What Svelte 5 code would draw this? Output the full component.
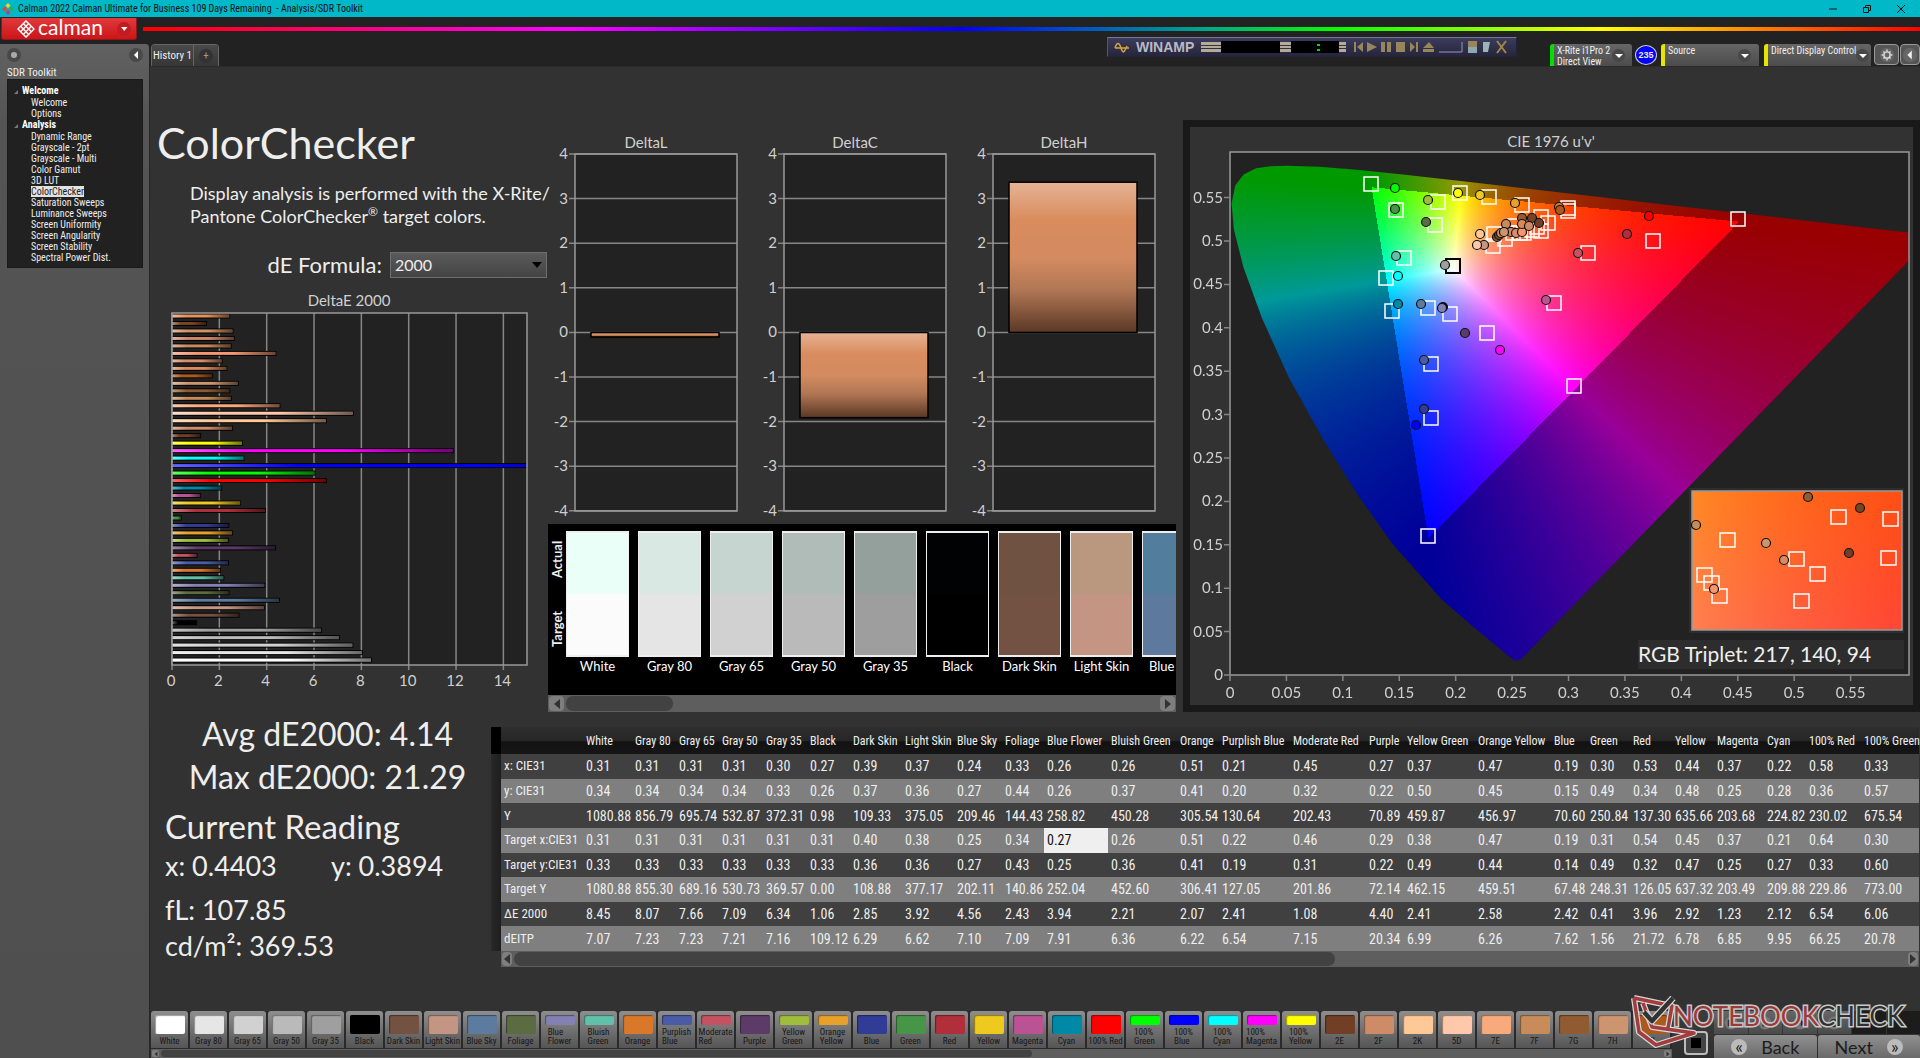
<script>
  import { onMount } from 'svelte';

  const tree = [
    { title: 'Welcome', items: ['Welcome', 'Options'] },
    {
      title: 'Analysis',
      items: [
        'Dynamic Range', 'Grayscale - 2pt', 'Grayscale - Multi', 'Color Gamut', '3D LUT', 'ColorChecker',
        'Saturation Sweeps', 'Luminance Sweeps', 'Screen Uniformity', 'Screen Angularity', 'Screen Stability',
        'Spectral Power Dist.'
      ]
    }
  ];
  const current = 'ColorChecker';

  // name, swatch colour, dE2000
  const patches = [
    ['White', '#ffffff', 8.45], ['Gray 80', '#e6e6e6', 8.07], ['Gray 65', '#d1d1d1', 7.66],
    ['Gray 50', '#bababa', 7.09], ['Gray 35', '#9f9f9f', 6.34], ['Black', '#000000', 1.06],
    ['Dark Skin', '#735242', 2.85], ['Light Skin', '#c39582', 3.92], ['Blue Sky', '#5d7b9e', 4.56],
    ['Foliage', '#5b6c42', 2.43], ['Blue Flower', '#8380b3', 3.94], ['Bluish Green', '#62bfa9', 2.21],
    ['Orange', '#da7829', 2.07], ['Purplish Blue', '#4a5ca6', 2.41], ['Moderate Red', '#c45262', 1.08],
    ['Purple', '#5d3b69', 4.4], ['Yellow Green', '#9fbc3c', 2.41], ['Orange Yellow', '#e7a12b', 2.58],
    ['Blue', '#313c96', 2.42], ['Green', '#479647', 0.41], ['Red', '#b02f3a', 3.96],
    ['Yellow', '#eec91e', 2.92], ['Magenta', '#bb5294', 1.23], ['Cyan', '#0088a7', 2.12],
    ['100% Red', '#ff0000', 6.54], ['100% Green', '#00ff00', 6.06], ['100% Blue', '#0000ff', 21.29],
    ['100% Cyan', '#00ffff', 3.06], ['100% Magenta', '#ff00ff', 11.9], ['100% Yellow', '#ffff00', 3.0],
    ['2E', '#703f25', 1.23], ['2F', '#cd8c67', 2.58], ['2K', '#ffc896', 6.54], ['5D', '#ffc8ab', 7.68],
    ['7E', '#f8aa7d', 4.58], ['7F', '#c78c5a', 2.52], ['7G', '#905b30', 2.46], ['7H', '#cd9470', 2.82],
    ['7I', '#ab591c', 1.72], ['7J', '#d9895a', 2.34], ['8D', '#d98d6a', 2.14], ['8E', '#f59571', 4.41],
    ['8F', '#c98a60', 2.52], ['8G', '#cc8768', 2.65], ['8H', '#d39268', 2.6], ['8I', '#774422', 1.48],
    ['8J', '#e8905a', 2.46]
  ];
  const strip = patches.slice(0, 39);
  const bars = [...patches].reverse();

  // Long swatch names go on two lines
  const wrapName = (n) => (n.length > 10 || /^100% [^R]/.test(n) ? n.replace(' ', '\n') : n);

  const compare = [
    ['White', '#ebfff9', '#fbfbfb'], ['Gray 80', '#d9e8e3', '#e5e5e5'], ['Gray 65', '#c6d5d0', '#d1d1d1'],
    ['Gray 50', '#afbcb8', '#bababa'], ['Gray 35', '#94a09b', '#9e9e9e'], ['Black', '#010204', '#000000'],
    ['Dark Skin', '#6f5241', '#735243'], ['Light Skin', '#ba987f', '#c39582'], ['Blue Sky', '#527d9d', '#5d7a9e']
  ];

  const widths = [49, 44, 43, 44, 44, 43, 52, 52, 48, 42, 64, 69, 42, 71, 76, 38, 71, 76, 36, 43, 42, 42, 50, 42, 55, 58];
  const heads = patches.slice(0, 26).map((p) => p[0]);
  const rows = [
    ['x: CIE31', '0.31 0.31 0.31 0.31 0.30 0.27 0.39 0.37 0.24 0.33 0.26 0.26 0.51 0.21 0.45 0.27 0.37 0.47 0.19 0.30 0.53 0.44 0.37 0.22 0.58 0.33'],
    ['y: CIE31', '0.34 0.34 0.34 0.34 0.33 0.26 0.37 0.36 0.27 0.44 0.26 0.37 0.41 0.20 0.32 0.22 0.50 0.45 0.15 0.49 0.34 0.48 0.25 0.28 0.36 0.57'],
    ['Y', '1080.88 856.79 695.74 532.87 372.31 0.98 109.33 375.05 209.46 144.43 258.82 450.28 305.54 130.64 202.43 70.89 459.87 456.97 70.60 250.84 137.30 635.66 203.68 224.82 230.02 675.54'],
    ['Target x:CIE31', '0.31 0.31 0.31 0.31 0.31 0.31 0.40 0.38 0.25 0.34 0.27 0.26 0.51 0.22 0.46 0.29 0.38 0.47 0.19 0.31 0.54 0.45 0.37 0.21 0.64 0.30'],
    ['Target y:CIE31', '0.33 0.33 0.33 0.33 0.33 0.33 0.36 0.36 0.27 0.43 0.25 0.36 0.41 0.19 0.31 0.22 0.49 0.44 0.14 0.49 0.32 0.47 0.25 0.27 0.33 0.60'],
    ['Target Y', '1080.88 855.30 689.16 530.73 369.57 0.00 108.88 377.17 202.11 140.86 252.04 452.60 306.41 127.05 201.86 72.14 462.15 459.51 67.48 248.31 126.05 637.32 203.49 209.88 229.86 773.00'],
    ['ΔE 2000', '8.45 8.07 7.66 7.09 6.34 1.06 2.85 3.92 4.56 2.43 3.94 2.21 2.07 2.41 1.08 4.40 2.41 2.58 2.42 0.41 3.96 2.92 1.23 2.12 6.54 6.06'],
    ['dEITP', '7.07 7.23 7.23 7.21 7.16 109.12 6.29 6.62 7.10 7.09 7.91 6.36 6.22 6.54 7.15 20.34 6.99 6.26 7.62 1.56 21.72 6.78 6.85 9.95 66.25 20.78']
  ].map(([label, cells]) => ({ label, cells: cells.split(' ') }));

  const deltas = [
    { name: 'DeltaL', value: -0.1 },
    { name: 'DeltaC', value: -1.91 },
    { name: 'DeltaH', value: 3.37 }
  ];
  const steps = [4, 3, 2, 1, 0, -1, -2, -3, -4];

  // CIE 1976 plot: 679 x 523 field
  const W = 679, H = 523, SX = 1128.4, SY = 868;
  const locus = [
    [0.2568, 0.0166], [0.2522, 0.0169], [0.2461, 0.0226], [0.2347, 0.035], [0.2161, 0.0549], [0.1877, 0.0871],
    [0.1441, 0.151], [0.1147, 0.2044], [0.0828, 0.2708], [0.0521, 0.3427], [0.0282, 0.4117], [0.0119, 0.4698],
    [0.0035, 0.5131], [0.0014, 0.5432], [0.0046, 0.5638], [0.0123, 0.577], [0.0231, 0.5837], [0.036, 0.5861],
    [0.0501, 0.5868], [0.0792, 0.5856], [0.1127, 0.5821], [0.1531, 0.5766], [0.2026, 0.5694], [0.2623, 0.5604],
    [0.3315, 0.5501], [0.4035, 0.5393], [0.4692, 0.5296], [0.5203, 0.5219], [0.583, 0.5125], [0.6234, 0.5065]
  ];
  const squares = [
    [141, 32], [166, 58], [208, 50], [230, 41], [259, 45], [292, 53], [205, 73], [338, 56], [338, 59], [508, 67],
    [423, 89], [358, 101], [324, 151], [174, 106], [156, 126], [162, 159], [198, 156], [220, 162], [257, 181],
    [201, 212], [201, 266], [344, 234], [198, 384], [264, 82], [263, 94], [275, 87], [285, 74], [283, 81],
    [290, 81], [294, 81], [311, 65], [318, 71], [311, 79], [307, 75], [302, 78]
  ];
  const dots = [
    [165, 36, '#00ff00'], [165, 57, '#479647'], [198, 48, '#9fbc3c'], [228, 41, '#ffff00'], [250, 43, '#eec91e'],
    [285, 51, '#e7a12b'], [196, 70, '#5b6c42'], [329, 55, '#da7829'], [330, 58, '#ab591c'], [419, 64, '#ff0000'],
    [397, 82, '#b02f3a'], [348, 101, '#c45262'], [316, 148, '#bb5294'], [166, 104, '#62bfa9'], [168, 124, '#00ffff'],
    [168, 152, '#0088a7'], [191, 152, '#5d7b9e'], [213, 155, '#000000'], [212, 156, '#8380b3'], [235, 181, '#5d3b69'],
    [270, 198, '#ff00ff'], [194, 208, '#4a5ca6'], [194, 257, '#313c96'], [186, 273, '#0000ff'], [215, 113, '#9f9f9f'],
    [250, 82, '#ffc896'], [254, 93, '#c39582'], [247, 93, '#ffc8ab'], [267, 85, '#735242'], [269, 83, '#774422'],
    [271, 81, '#c78c5a'], [276, 72, '#c78c5a'], [281, 80, '#cc8768'], [274, 80, '#cd9470'], [286, 81, '#d98d6a'],
    [292, 80, '#f59571'], [292, 66, '#905b30'], [292, 72, '#d9895a'], [302, 66, '#774422'], [299, 74, '#cd8c67'],
    [309, 71, '#703f25']
  ];
  const insetSquares = [[35, 49], [146, 26], [198, 28], [196, 67], [104, 68], [125, 83], [109, 110], [12, 84], [19, 92], [27, 105]];
  const insetDots = [
    [116, 6, '#905b30'], [168, 17, '#774422'], [157, 62, '#703f25'], [74, 52, '#cd9470'], [92, 69, '#d98c5e'],
    [4, 34, '#c78c5a'], [22, 98, '#f59571']
  ];
  const xTicks = Array.from({ length: 12 }, (_, i) => i / 20);
  const xLabel = (t) => String(+t.toFixed(2));

  let field, inset;

  // Linear-light sRGB for a u'v' point, scaled to full brightness and dimmed outside the gamut
  function colour(u, v) {
    const den = 6 * u - 16 * v + 12;
    const x = (9 * u) / den, y = (4 * v) / den;
    const X = x / y, Z = (1 - x - y) / y;
    const rgb = [
      3.2406 * X - 1.5372 - 0.4986 * Z,
      -0.9689 * X + 1.8758 + 0.0415 * Z,
      0.0557 * X - 0.204 + 1.057 * Z
    ];
    const k = Math.min(...rgb) < 0 ? 153 : 255;
    const top = Math.max(...rgb);
    return rgb.map((c) => (Math.max(0, c) / top) * k);
  }

  function paint(canvas, u0, u1, v0, v1) {
    const { width: w, height: h } = canvas;
    const ctx = canvas.getContext('2d');
    const img = ctx.createImageData(w, h);
    for (let j = 0; j < h; j++) {
      for (let i = 0; i < w; i++) {
        const [r, g, b] = colour(u0 + ((u1 - u0) * i) / w, v1 - ((v1 - v0) * j) / h);
        img.data.set([r, g, b, 255], (j * w + i) * 4);
      }
    }
    ctx.putImageData(img, 0, 0);
    return ctx;
  }

  onMount(() => {
    const ctx = paint(field, 0, W / SX, 0.0001, H / SY);
    ctx.globalCompositeOperation = 'destination-in';
    ctx.beginPath();
    locus.forEach(([u, v]) => ctx.lineTo(u * SX, H - v * SY));
    ctx.closePath();
    ctx.fill();
    paint(inset, 0.243, 0.286, 0.499, 0.526);
  });
</script>

{#snippet scrollbar(size, label)}
  <div class="scroll">
    <button aria-label="Scroll {label} left"><svg viewBox="0 0 8 10"><path d="M7 0v10L1 5z" /></svg></button>
    <div class="track"><div class="thumb" style="width:{size}%"></div></div>
    <button aria-label="Scroll {label} right"><svg viewBox="0 0 8 10"><path d="M1 0v10l6-5z" /></svg></button>
  </div>
{/snippet}

<div class="app">
  <header class="titlebar">
    <svg class="appicon" viewBox="0 0 14 14">
      <path fill="#f5d21c" d="M7 0l3 3-3 3-3-3z" /><path fill="#2fae4a" d="M11 4l3 3-3 3-3-3z" />
      <path fill="#e8442e" d="M3 4l3 3-3 3-3-3z" /><path fill="#b03fa0" d="M7 8l3 3-3 3-3-3z" />
    </svg>
    <span class="caption">Calman 2022 Calman Ultimate for Business 109 Days Remaining&nbsp; - Analysis/SDR Toolkit</span>
    <div class="wincontrols">
      <button aria-label="Minimize"><svg viewBox="0 0 10 10"><path d="M1 5h8" /></svg></button>
      <button aria-label="Restore"><svg viewBox="0 0 10 10"><path d="M1.500 3.500h5v5h-5zM3.500 3V1.500h5v5H7" /></svg></button>
      <button aria-label="Close"><svg viewBox="0 0 10 10"><path d="M1 1l8 8M9 1L1 9" /></svg></button>
    </div>
  </header>

  <div class="brandbar">
    <button class="brand">
      <svg class="diamond" viewBox="0 0 20 20">
        <path d="M10 1l9 9-9 9-9-9z" fill="none" stroke="#fff" stroke-width="1.600" />
        <path d="M7 4l9 9M4 7l9 9M13 4l-9 9M16 7l-9 9" stroke="#fff" stroke-width="1.500" />
      </svg>
      <span>calman</span>
      <svg class="chev" viewBox="0 0 14 14"><circle cx="7" cy="7" r="7" fill="#c01c22" /><path fill="#fff" d="M4 5h6.500L7.200 9z" /></svg>
    </button>
    <div class="rainbow"></div>
  </div>

  <div class="winamp">
    <svg viewBox="1 1 408 18">
      <path d="M8 11c2-6 4-6 6 0s3 5 6-2M8 11h14" fill="none" stroke="#d8a640" stroke-width="1.500" />
      <g fill="#b5aa96"><path d="M94 5h20v3H94zM94 9h20v2H94zM94 12h20v3H94zM173 5h11v3h-11zM173 9h11v2h-11zM173 12h11v3h-11zM232 5h7v3h-7zM232 9h7v2h-7zM232 12h7v3h-7z" /></g>
      <path d="M114 4h59v12h-59zM184 4h48v12h-48z" fill="#000" />
      <path d="M210 7h3v2h-3zM210 12h3v2h-3z" fill="#00e000" />
      <g fill="#97855c">
        <path d="M247 5h2v10h-2zM256 5v10l-6-5zM260 5v10l10-5zM274 5h4v10h-4zM280 5h4v10h-4zM289 5h9v10h-9zM303 5v10l5-5zM309 5h2v10h-2zM316 11h11l-5-6zM316 12h11v3h-11z" />
        <path d="M361 4h9v6h-9z" />
      </g>
      <path d="M332 15h23V5" fill="none" stroke="#9897b8" />
      <path d="M361 10h9v6h-9z" fill="#8fa8b0" /><path d="M376 5h7l-2 10h-5z" fill="#9ab4b8" />
      <path d="M390 4l9 12M399 4l-9 12" stroke="#a08848" stroke-width="2" />
    </svg>
    <span>WINAMP</span>
  </div>

  <div class="body">
    <aside>
      <div class="asidehead">
        <button class="knob" aria-label="Record"><i></i></button>
        <button class="knob" aria-label="Collapse panel"><svg viewBox="0 0 8 10"><path d="M6 1v8L2 5z" fill="#fff" /></svg></button>
      </div>
      <h2>SDR Toolkit</h2>
      <nav>
        {#each tree as group}
          <div class="group">{group.title}</div>
          {#each group.items as item}
            <a href="#top" class:on={item === current}>{item}</a>
          {/each}
        {/each}
      </nav>
    </aside>

    <div class="work">
      <div class="tabs">
        <div class="tabset">
          <button class="tab">History 1</button>
          <button class="tab add" aria-label="New tab"><span>+</span></button>
        </div>
        <div class="devices">
          <button class="device meter"><span>X-Rite i1Pro 2<br />Direct View</span><i class="drop"></i></button>
          <button class="badge">235</button>
          <button class="device source"><span>Source</span><i class="drop"></i></button>
          <button class="device display"><span>Direct Display Control</span><i class="drop"></i></button>
          <button class="square" aria-label="Settings">
            <svg viewBox="0 0 20 20"><circle cx="10" cy="10" r="8" fill="#666" /><circle cx="10" cy="10" r="3.500" fill="none" stroke="#ddd" stroke-width="1.600" /><path d="M10 4v2M10 14v2M4 10h2M14 10h2M6 6l1 1M13 13l1 1M14 6l-1 1M7 13l-1 1" stroke="#ddd" stroke-width="1.600" /></svg>
          </button>
          <button class="square" aria-label="Expand">
            <svg viewBox="0 0 20 20"><circle cx="10" cy="10" r="8" fill="#666" /><path d="M12 5v10l-5-5z" fill="#eee" /></svg>
          </button>
        </div>
      </div>

      <main>
        <div class="upper">
          <section class="intro">
            <h1>ColorChecker</h1>
            <p>Display analysis is performed with the X-Rite/<br />Pantone ColorChecker<sup>®</sup> target colors.</p>
            <div class="formula">
              <label for="formula">dE Formula:</label>
              <select id="formula"><option>2000</option></select>
            </div>
            <svg class="chart" viewBox="0 0 397 405">
              <defs>
                <linearGradient id="gloss">
                  <stop offset="0" stop-color="#fff" stop-opacity=".4" />
                  <stop offset=".25" stop-color="#fff" stop-opacity="0" />
                  <stop offset=".6" stop-color="#000" stop-opacity="0" />
                  <stop offset="1" stop-color="#000" stop-opacity=".55" />
                </linearGradient>
                <clipPath id="plot"><rect x="22" y="23" width="355" height="352" /></clipPath>
              </defs>
              <text class="axis" x="199" y="16" text-anchor="middle">DeltaE 2000</text>
              <rect x="22" y="23" width="355" height="352" fill="#222" />
              {#each [0, 2, 4, 6, 8, 10, 12, 14] as t}
                <path class="grid" d="M{22 + t * 23.67} 23v357" />
                <text class="axis" x={21 + t * 23.67} y="396" text-anchor="middle">{t}</text>
              {/each}
              <g clip-path="url(#plot)">
                {#each bars as [name, fill, value], i}
                  <rect x="21" y={23.5 + i * 7.48} width={value * 23.67 + 1} height="5" fill="#000" />
                  <rect x="22" y={24.5 + i * 7.48} width={value * 23.67 - 1} height="3" {fill} />
                  <rect x="22" y={24.5 + i * 7.48} width={value * 23.67 - 1} height="3" fill="url(#gloss)" />
                {/each}
              </g>
              <rect class="frame" x="22" y="23" width="355" height="352" />
            </svg>
          </section>

          <section class="middle">
            <div class="deltas">
              {#each deltas as { name, value }}
                <svg viewBox="0 0 209 394">
                  <defs>
                    <linearGradient id="skin" x2="0" y2="1">
                      <stop offset="0" stop-color="#e6b395" /><stop offset=".25" stop-color="#d98c5e" />
                      <stop offset=".5" stop-color="#d48b60" /><stop offset=".72" stop-color="#b07654" />
                      <stop offset="1" stop-color="#5a3825" />
                    </linearGradient>
                  </defs>
                  <text class="axis" x="99" y="18" text-anchor="middle">{name}</text>
                  <rect x="28" y="24" width="162" height="357" fill="#222" />
                  {#each steps as s, i}
                    <path class="grid" d="M22 {24 + i * 44.6}h168" />
                    <text class="axis" x="21" y={29 + i * 44.6} text-anchor="end">{s}</text>
                  {/each}
                  <rect class="frame" x="28" y="24" width="162" height="357" />
                  <rect x="44" y={202.5 - Math.max(0, value) * 44.6} width="128" height={Math.abs(value) * 44.6} fill="url(#skin)" stroke="#000" stroke-width="1.500" />
                </svg>
              {/each}
            </div>
            <div class="compare">
              <div class="side"><span>Target</span><span>Actual</span></div>
              {#each compare as [name, actual, target]}
                <div class="patch">
                  <div class="pair"><i style="background:{actual}"></i><i style="background:{target}"></i></div>
                  <span>{name}</span>
                </div>
              {/each}
            </div>
            {@render scrollbar(18, 'patches')}
          </section>

          <section class="cie">
            <svg viewBox="0 0 723 578">
              <text class="axis" x="361" y="20" text-anchor="middle">CIE 1976 u'v'</text>
              <rect x="40" y="25" width={W} height={H} fill="#222" />
              <foreignObject x="40" y="25" width={W} height={H}><canvas bind:this={field} width={W} height={H}></canvas></foreignObject>
              <rect class="frame" x="40" y="25" width={W} height={H} />
              {#each xTicks as t}
                <path class="grid" d="M{40 + t * SX} 548v6M34 {548 - t * SY}h6" />
                <text class="axis" x={40 + t * SX} y="571" text-anchor="middle">{xLabel(t)}</text>
                <text class="axis" x="33" y={553 - t * SY} text-anchor="end">{xLabel(t)}</text>
              {/each}
              <g transform="translate(40 25)">
                {#each squares as [x, y]}<rect class="target" x={x - 7} y={y - 7} width="14" height="14" />{/each}
                <rect class="target dark" x="216" y="107" width="14" height="14" />
                {#each dots as [x, y, fill]}<circle class="dot" cx={x} cy={y} r="4.500" {fill} />{/each}
              </g>
              <rect x="499" y="361" width="215" height="145" fill="#2d2d2d" />
              <foreignObject x="502" y="364" width="210" height="139"><canvas bind:this={inset} width="210" height="139"></canvas></foreignObject>
              <rect class="frame" x="502" y="364" width="210" height="139" />
              <g transform="translate(502 364)">
                {#each insetSquares as [x, y]}<rect class="target" x={x - 7} y={y - 7} width="15" height="14" />{/each}
                {#each insetDots as [x, y, fill]}<circle class="dot" cx={x} cy={y} r="4.500" {fill} />{/each}
              </g>
              <rect x="448" y="513" width="266" height="29" fill="#2d2d2d" />
              <text class="triplet" x="448" y="535">RGB Triplet: 217, 140, 94</text>
            </svg>
          </section>
        </div>

        <div class="lower">
          <section class="stats">
            <div class="totals">
              <div>Avg dE2000: 4.14</div>
              <div>Max dE2000: 21.29</div>
            </div>
            <h3>Current Reading</h3>
            <div class="xy"><span>x: 0.4403</span><span>y: 0.3894</span></div>
            <div class="lum"><div>fL: 107.85</div><div>cd/m²: 369.53</div></div>
          </section>
          <section class="data">
            <table>
              <colgroup>
                <col style="width:10px" /><col style="width:82px" />
                {#each widths as w}<col style="width:{w}px" />{/each}
              </colgroup>
              <thead>
                <tr><th class="gutter"></th><th></th>{#each heads as h}<th scope="col">{h}</th>{/each}</tr>
              </thead>
              <tbody>
                {#each rows as row, r}
                  <tr>
                    <td class="gutter"></td>
                    <th scope="row">{row.label}</th>
                    {#each row.cells as cell, c}<td class:picked={r === 3 && c === 10}>{cell}</td>{/each}
                  </tr>
                {/each}
              </tbody>
            </table>
            {@render scrollbar(59, 'readings')}
          </section>
        </div>
      </main>

      <footer>
        <div class="stripwrap">
          <div class="strip">
            {#each strip as [name, fill]}
              <button><i style="background:{fill}"></i><span>{wrapName(name)}</span></button>
            {/each}
          </div>
          {@render scrollbar(58, 'swatches')}
        </div>
        <div class="transport">
          <button class="stop" aria-label="Stop"><i></i></button>
          <div class="nav">
            <div class="tools">
              <button aria-label="Stop reading"><svg viewBox="0 0 20 20"><circle cx="10" cy="10" r="8" fill="#777" /><path d="M6 6h8v8H6z" fill="#222" /></svg></button>
              <button aria-label="Read"><svg viewBox="0 0 20 20"><circle cx="10" cy="10" r="8" fill="#777" /><path d="M7 5v10l8-5z" fill="#222" /></svg></button>
              <button aria-label="Read continuously"><svg viewBox="0 0 20 20"><circle cx="10" cy="10" r="8" fill="#777" /><path d="M5 6v8l5-4zM11 6v8l5-4z" fill="#222" /></svg></button>
              <button aria-label="Loop"><svg viewBox="0 0 20 20"><circle cx="10" cy="10" r="8" fill="#777" /><circle cx="10" cy="10" r="4" fill="none" stroke="#222" stroke-width="2" /></svg></button>
              <button class="off" aria-label="Previous"></button>
              <button class="off" aria-label="Skip"></button>
            </div>
            <div class="pager">
              <button><b>«</b>Back</button>
              <button>Next<b>»</b></button>
            </div>
          </div>
        </div>
      </footer>
    </div>
  </div>

  <svg class="mark" viewBox="0 0 290 56">
    <g fill="none" stroke-linejoin="round">
      <path d="M6 4l38 8-4 22M6 4l5 34 17 13 38-12-42-6-9-24" stroke="#d8d8d8" stroke-width="6" />
      <path d="M6 4l38 8-4 22M6 4l5 34 17 13 38-12-42-6-9-24" stroke="#a33c3c" stroke-width="3.500" />
      <path d="M16 18l8 9L45 4" stroke="#d8d8d8" stroke-width="7" />
      <path d="M16 18l8 9L45 4" stroke="#333" stroke-width="4.500" />
    </g>
    <text x="45" y="32"><tspan class="note">NOTEBOOK</tspan><tspan class="check">CHECK</tspan></text>
  </svg>
</div>

<style>
  :global(body) { background: #323232; }
  .app {
    --narrow: 'Liberation Sans Narrow', 'Noto Sans Condensed', 'Roboto Condensed', 'Open Sans', sans-serif;
    min-height: 100vh; display: flex; flex-direction: column; position: relative; overflow: hidden;
    background: #222; color: #eee; font-family: Lato, 'Open Sans', sans-serif;
  }
  .app *, .app { box-sizing: border-box; }
  button { font: inherit; color: inherit; border: 0; padding: 0; background: none; }
  svg { display: block; }
  h1, h2, h3, p { margin: 0; font-weight: 400; }

  .titlebar { height: 17px; background: #00b8c7; color: #111; display: flex; align-items: center; padding-left: 2px; }
  .appicon { width: 12px; height: 14px; }
  .caption { font: 10px/16px var(--narrow); margin-left: 4px; }
  .wincontrols { margin-left: auto; display: flex; gap: 24px; padding-right: 14px; }
  .wincontrols svg { width: 10px; height: 10px; fill: none; stroke: #111; }

  .brandbar { height: 27px; display: flex; align-items: flex-start; gap: 6px; }
  .brand {
    width: 136px; height: 22px; margin: 1px 0 0 1px; border-radius: 0 0 3px 3px; display: flex; align-items: center;
    background: linear-gradient(#e03a3c, #cc1519); border: 1px solid #8c1a1c; border-top: 0; padding: 0 5px 0 15px;
    color: #fff; font-size: 21px; line-height: 20px;
  }
  .brand span { margin: 0 auto 3px 3px; }
  .diamond { width: 18px; height: 18px; }
  .chev { width: 14px; height: 14px; }
  .rainbow {
    flex: 1; height: 4px; margin-top: 10px;
    background: linear-gradient(90deg, #f00, #f0f 24%, #00f 46%, #0a8 60%, #0f0 67%, #ff0 82%, #f00);
  }
  .winamp {
    position: absolute; top: 37px; right: 403px; width: 410px; height: 20px; background: linear-gradient(#3c3c5c, #25253c);
    border: 1px solid #66668a; border-color: #77779a #22223a #22223a #55557a;
  }
  .winamp svg { width: 100%; height: 100%; }
  .winamp span { position: absolute; left: 28px; top: 2px; font: bold 14px/15px 'Liberation Sans', sans-serif; color: #b9b9c4; }

  .body { flex: 1; display: flex; }
  aside {
    width: 150px; flex: none; background: linear-gradient(#616161, #545454 80px, #4f4f4f); border-right: 1px solid #262626;
    padding: 0 6px 0 7px; border-top-right-radius: 4px; font-family: var(--narrow);
  }
  .asidehead { height: 22px; display: flex; justify-content: space-between; align-items: center; }
  .knob { width: 14px; height: 14px; border-radius: 7px; background: #484848; display: grid; place-items: center; }
  .knob i { width: 6px; height: 6px; border-radius: 3px; background: #aaa; }
  .knob svg { width: 8px; height: 10px; }
  h2 { font-size: 11px; line-height: 13px; }
  nav { background: #212121; border: 1px solid #1a1a1a; padding: 5px 0 4px 14px; display: flex; flex-direction: column; align-items: flex-start; }
  .group { font-weight: bold; font-size: 10px; line-height: 12px; color: #fff; position: relative; }
  .group::before {
    content: ''; position: absolute; left: -8px; top: 5px; border: 2px solid; border-color: transparent #777 #777 transparent;
  }
  nav a { color: #eee; text-decoration: none; font-size: 10px; line-height: 11px; margin-left: 9px; }
  nav a.on { background: #e2e2e2; color: #222; }

  .work { flex: 1; min-width: 0; display: flex; flex-direction: column; }
  .tabs { height: 22px; display: flex; justify-content: space-between; }
  .tabset { display: flex; border: 1px solid #666; border-width: 1px 1px 0; border-radius: 4px 4px 0 0; overflow: hidden; margin-left: 1px; }
  .tab { width: 42px; background: linear-gradient(#4a4a4a, #363636); font: 11px/20px var(--narrow); border-right: 1px solid #666; }
  .add { width: 24px; border: 0; }
  .add span { display: block; width: 14px; margin: auto; border-radius: 7px; background: #333; line-height: 14px; color: #999; }
  .devices { display: flex; font: 10px/11px var(--narrow); }
  .device {
    display: flex; justify-content: space-between; align-items: flex-start; text-align: left; padding: 1px 8px 0 3px;
    background: linear-gradient(#666, #4c4c4c); border-left: 4px solid #e5e500; border-radius: 3px 3px 0 0; margin-right: 5px; white-space: nowrap;
  }
  .meter { width: 82px; border-left-color: #00e000; margin-right: 0; padding-right: 7px; }
  .source { width: 98px; }
  .display { width: 107px; margin-right: 3px; padding-right: 4px; }
  .drop { width: 13px; height: 13px; border-radius: 7px; background: #484848; margin-top: 4px; display: grid; place-items: center; flex: none; }
  .drop::before { content: ''; border: 4px solid transparent; border-top-color: #fff; border-bottom: 0; }
  .badge { width: 22px; height: 20px; margin: 1px 4px 0 3px; border-radius: 50%; background: #00f; border: 1px solid #ccc; font: bold 9px/18px 'Liberation Sans', sans-serif; }
  .square { width: 25px; height: 21px; border: 1px solid #999; border-radius: 4px; background: #555; margin-right: 1px; display: grid; place-items: center; }
  .square:last-child { width: 20px; margin-right: 0; }
  .square svg { width: 18px; height: 18px; }

  main { flex: 1; background: #323232; border-top: 1px solid #2a2a2a; }
  .upper { display: grid; grid-template-columns: minmax(0, 397fr) minmax(0, 636fr) minmax(0, 737fr); align-items: start; }
  .upper svg { width: 100%; height: auto; }
  .axis { font-size: 15px; fill: #d0d0d0; }
  .grid { stroke: #868686; stroke-width: 1.500; fill: none; }
  .frame { fill: none; stroke: #999; stroke-width: 1.500; }

  h1 { font-size: 43px; line-height: 50px; padding: 51px 0 0 7px; }
  .intro p { font-size: 18px; line-height: 23px; padding: 14px 0 0 40px; white-space: nowrap; }
  sup { font-size: 12px; line-height: 0; }
  .formula { display: flex; justify-content: flex-end; align-items: center; gap: 8px; padding-top: 24px; position: relative; }
  .formula label { font-size: 22px; line-height: 26px; }
  .formula select {
    appearance: none; width: 157px; height: 26px; border: 1px solid #6e6e6e; border-radius: 0; padding: 0 4px; color: #eee;
    font: 16px/24px Lato, sans-serif; background: linear-gradient(#5a5a5a, #444);
  }
  .formula::after { content: ''; position: absolute; right: 5px; bottom: 10px; border: 5px solid transparent; border-top: 6px solid #000; border-bottom: 0; }
  .chart { margin-top: 12px; }

  .middle { padding: 63px 7px 0 0; }
  .deltas { display: grid; grid-template-columns: repeat(3, minmax(0, 1fr)); padding-right: 2px; }
  .compare { background: #000; height: 171px; margin-left: 1px; overflow: hidden; display: flex; gap: 9px; padding-top: 7px; }
  .side {
    width: 18px; height: 126px; flex: none; margin-right: -9px; padding: 10px 0; display: flex; justify-content: space-between;
    writing-mode: vertical-rl; transform: rotate(180deg); font-weight: bold; font-size: 13px; line-height: 18px;
  }
  .patch { width: 63px; flex: none; text-align: center; font-size: 13px; line-height: 18px; color: #fff; white-space: nowrap; }
  .pair { height: 126px; border: 2px solid #eee; border-width: 2px 1px; display: flex; flex-direction: column; }
  .pair i { flex: 1; }

  .scroll { display: flex; align-items: center; gap: 2px; background: #5e5e5e; height: 17px; padding: 1px; }
  .middle .scroll { margin-left: 1px; }
  .scroll button { width: 15px; height: 15px; border-radius: 4px; background: #7e7e7e; display: grid; place-items: center; flex: none; }
  .scroll svg { width: 8px; height: 10px; fill: #333; }
  .track { flex: 1; height: 100%; }
  .thumb { height: 100%; background: #424242; border-radius: 7px; }

  .cie { margin-top: 53px; border: 7px solid #191919; }
  canvas { display: block; width: 100%; height: 100%; }
  .target { fill: none; stroke: #fff; stroke-width: 1.500; }
  .dark { stroke: #000; stroke-width: 2; }
  .dot { stroke: #111; stroke-width: 1.200; }
  .triplet { font-size: 21px; fill: #eee; }

  .lower { display: flex; }
  .stats { width: 341px; flex: none; }
  .totals { text-align: center; font-size: 32px; line-height: 43px; padding-left: 14px; }
  h3 { font-size: 33px; line-height: 43px; padding: 7px 0 0 15px; }
  .xy, .lum { font-size: 27px; line-height: 36px; padding-left: 15px; }
  .xy { display: grid; grid-template-columns: 166px 1fr; }
  .lum { padding-top: 8px; }

  .data { flex: 1; min-width: 0; padding: 15px 1px 0 0; overflow: hidden; }
  table { width: 100%; height: 224px; table-layout: fixed; border-collapse: collapse; font: 14px/18px var(--narrow); }
  th, td { padding: 0 0 0 3px; text-align: left; font-weight: 400; white-space: nowrap; }
  th { font-size: 13px; }
  thead th { font-size: 12px; }
  thead tr { height: 27px; background: linear-gradient(#2e2e2e, #262626 50%, #121212 55%, #161616); }
  tbody tr { background: #404040; }
  tbody tr:nth-child(even) { background: #7f7f7f; }
  td.gutter { background: linear-gradient(90deg, #292929, #1e1e1e); }
  th.gutter { background: #000; }
  td.picked { background: #efefef; color: #111; }
  .data .scroll { margin-left: 10px; height: 16px; }
  .data .scroll button { width: 10px; height: 14px; }

  footer { height: 47px; display: flex; background: #2a2a2a; }
  .stripwrap { flex: 1; min-width: 0; padding-left: 1px; }
  .strip { display: flex; gap: 2px; overflow: hidden; height: 37px; }
  .strip button {
    width: 37px; height: 37px; flex: none; display: flex; flex-direction: column; align-items: center; gap: 3px; padding: 4px 0 2px;
    background: linear-gradient(#8e8e8e, #555); border-radius: 3px 3px 0 0; color: #161616;
  }
  .strip i { width: 30px; flex: 1; border-radius: 2px; box-shadow: inset 1px 1px 1px #0006; }
  .strip span { font: 9px/9px var(--narrow); white-space: pre; text-align: left; }
  .stripwrap .scroll { height: 9px; margin-top: 1px; }
  .stripwrap .scroll button { width: 7px; height: 7px; border-radius: 2px; }
  .stripwrap .scroll svg { width: 4px; height: 6px; }
  .transport { width: 248px; flex: none; display: flex; background: linear-gradient(#3c3c3c, #2e2e2e); }
  .stop { width: 24px; height: 24px; margin: 20px 6px 0 12px; border: 2px solid #bbb; border-radius: 4px; background: #444; display: grid; place-items: center; }
  .stop i { width: 10px; height: 10px; background: #000; }
  .nav { flex: 1; display: flex; flex-direction: column; gap: 1px; }
  .tools { display: grid; grid-template-columns: repeat(6, 1fr); gap: 1px; height: 23px; }
  .tools button { background: linear-gradient(#666, #4a4a4a); display: grid; place-items: center; }
  .tools button.off { background: #1c1c1c; }
  .tools svg { width: 16px; height: 16px; }
  .pager { flex: 1; display: grid; grid-template-columns: 1fr 1fr; gap: 1px; }
  .pager button { background: linear-gradient(#909090, #6a6a6a); color: #1c1c1c; font-size: 18px; line-height: 22px; display: flex; align-items: center; justify-content: center; gap: 14px; border-radius: 3px 3px 0 0; }
  .pager b { width: 16px; height: 16px; border-radius: 8px; background: #bbb; font-weight: 400; line-height: 14px; }
  .mark { position: absolute; right: 2px; bottom: 8px; width: 290px; height: 56px; }
  .mark text { font: 26px Lato, sans-serif; stroke-width: 3px; paint-order: stroke; stroke: #c8c8c8; }
  .note { fill: #9c3a3a; }
  .check { fill: #303030; }
</style>
